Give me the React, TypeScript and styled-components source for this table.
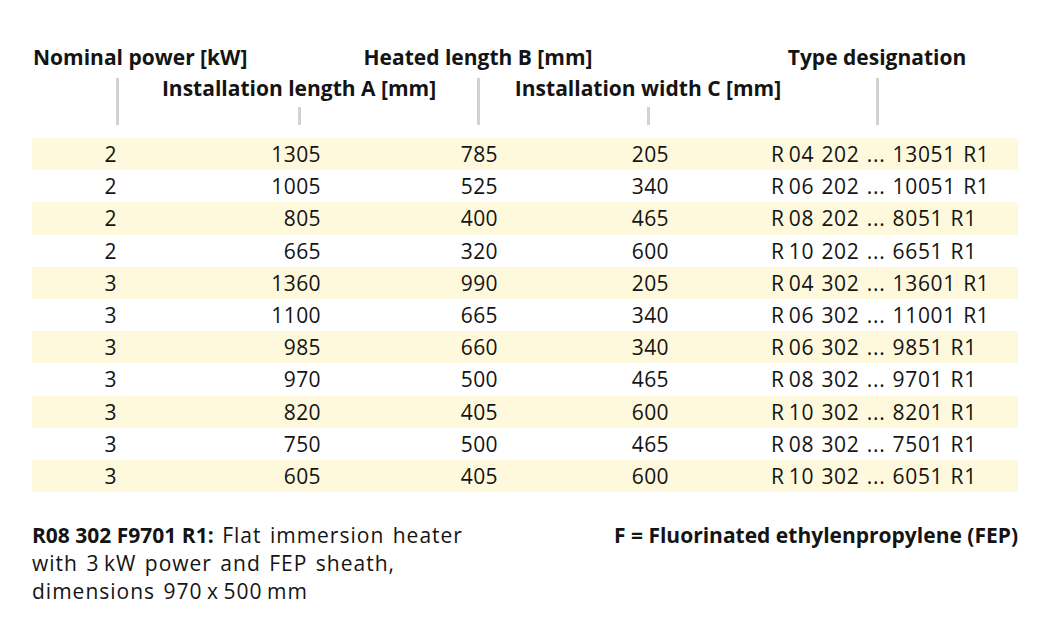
import React from 'react';
import styled, { createGlobalStyle } from 'styled-components';

const GlobalStyle = createGlobalStyle`
  html, body {
    margin: 0;
    padding: 0;
    background: #ffffff;
  }
  body {
    font-family: 'Open Sans', 'Noto Sans', sans-serif;
    color: #141414;
  }
`;

const COLUMNS = '170px 194px 164px 176px 282px';

const Page = styled.div`
  width: 986px;
  padding: 42px 0 0 32px;
`;

const HeaderGrid = styled.div`
  display: grid;
  grid-template-columns: ${COLUMNS};
  height: 83px;
  margin-bottom: 13px;
`;

const HeaderCell = styled.div`
  display: flex;
  flex-direction: column;
  align-items: center;
  min-width: 0;
`;

const HeaderLabel = styled.div<{ $level: 1 | 2; $start?: boolean }>`
  height: 31px;
  line-height: 31px;
  font-size: 21px;
  font-weight: 700;
  white-space: nowrap;
  margin-top: ${p => (p.$level === 2 ? '31px' : '0')};
  align-self: ${p => (p.$start ? 'flex-start' : 'center')};
  padding-left: ${p => (p.$start ? '1px' : '0')};
`;

const Tick = styled.div<{ $level: 1 | 2 }>`
  width: 3px;
  flex: 1;
  margin-top: ${p => (p.$level === 2 ? '3px' : '5px')};
  background: #d2d2d2;
`;

const Row = styled.div<{ $shaded: boolean }>`
  display: grid;
  grid-template-columns: ${COLUMNS};
  height: 32.2px;
  align-items: center;
  background: ${p => (p.$shaded ? '#fef9dc' : 'transparent')};
  font-size: 21px;
  letter-spacing: 0.4px;
`;

const Cell = styled.div<{ $pad: number; $left?: boolean }>`
  text-align: ${p => (p.$left ? 'left' : 'right')};
  padding-right: ${p => (p.$left ? 0 : p.$pad)}px;
  padding-left: ${p => (p.$left ? p.$pad : 0)}px;
  white-space: nowrap;
`;

const TypeCell = styled(Cell)`
  letter-spacing: 0.7px;
  word-spacing: 1px;
`;

const Footer = styled.div`
  display: flex;
  justify-content: space-between;
  align-items: flex-start;
  margin-top: 29px;
  font-size: 21px;
  line-height: 28px;
`;

const Note = styled.p`
  margin: 0;
  letter-spacing: 1px;
  word-spacing: 2px;

  b {
    letter-spacing: 0;
    word-spacing: 0;
  }
`;

const Legend = styled.p`
  margin: 0;
  font-weight: 700;
`;

type Level = 1 | 2;

const headers: { label: string; level: Level; start?: boolean }[] = [
  { label: 'Nominal power [kW]', level: 1, start: true },
  { label: 'Installation length A [mm]', level: 2 },
  { label: 'Heated length B [mm]', level: 1 },
  { label: 'Installation width C [mm]', level: 2 },
  { label: 'Type designation', level: 1 },
];

const rows: [string, string, string, string, string][] = [
  ['2', '1305', '785', '205', 'R\u200904 202 ... 13051 R1'],
  ['2', '1005', '525', '340', 'R\u200906 202 ... 10051 R1'],
  ['2', '805', '400', '465', 'R\u200908 202 ... 8051 R1'],
  ['2', '665', '320', '600', 'R\u200910 202 ... 6651 R1'],
  ['3', '1360', '990', '205', 'R\u200904 302 ... 13601 R1'],
  ['3', '1100', '665', '340', 'R\u200906 302 ... 11001 R1'],
  ['3', '985', '660', '340', 'R\u200906 302 ... 9851 R1'],
  ['3', '970', '500', '465', 'R\u200908 302 ... 9701 R1'],
  ['3', '820', '405', '600', 'R\u200910 302 ... 8201 R1'],
  ['3', '750', '500', '465', 'R\u200908 302 ... 7501 R1'],
  ['3', '605', '405', '600', 'R\u200910 302 ... 6051 R1'],
];

export default function App() {
  return (
    <>
      <GlobalStyle />
      <Page>
        <HeaderGrid>
          {headers.map(h => (
            <HeaderCell key={h.label}>
              <HeaderLabel $level={h.level} $start={h.start}>
                {h.label}
              </HeaderLabel>
              <Tick $level={h.level} />
            </HeaderCell>
          ))}
        </HeaderGrid>

        {rows.map((r, i) => (
          <Row key={r[4] + i} $shaded={i % 2 === 0}>
            <Cell $pad={85}>{r[0]}</Cell>
            <Cell $pad={75}>{r[1]}</Cell>
            <Cell $pad={62}>{r[2]}</Cell>
            <Cell $pad={67}>{r[3]}</Cell>
            <TypeCell $pad={35} $left>
              {r[4]}
            </TypeCell>
          </Row>
        ))}

        <Footer>
          <Note>
            <b>R08 302 F9701 R1:</b> Flat immersion heater
            <br />
            with 3{'\u2009'}kW power and FEP sheath,
            <br />
            dimensions 970{'\u2009'}x{'\u2009'}500{'\u2009'}mm
          </Note>
          <Legend>F = Fluorinated ethylenpropylene (FEP)</Legend>
        </Footer>
      </Page>
    </>
  );
}
